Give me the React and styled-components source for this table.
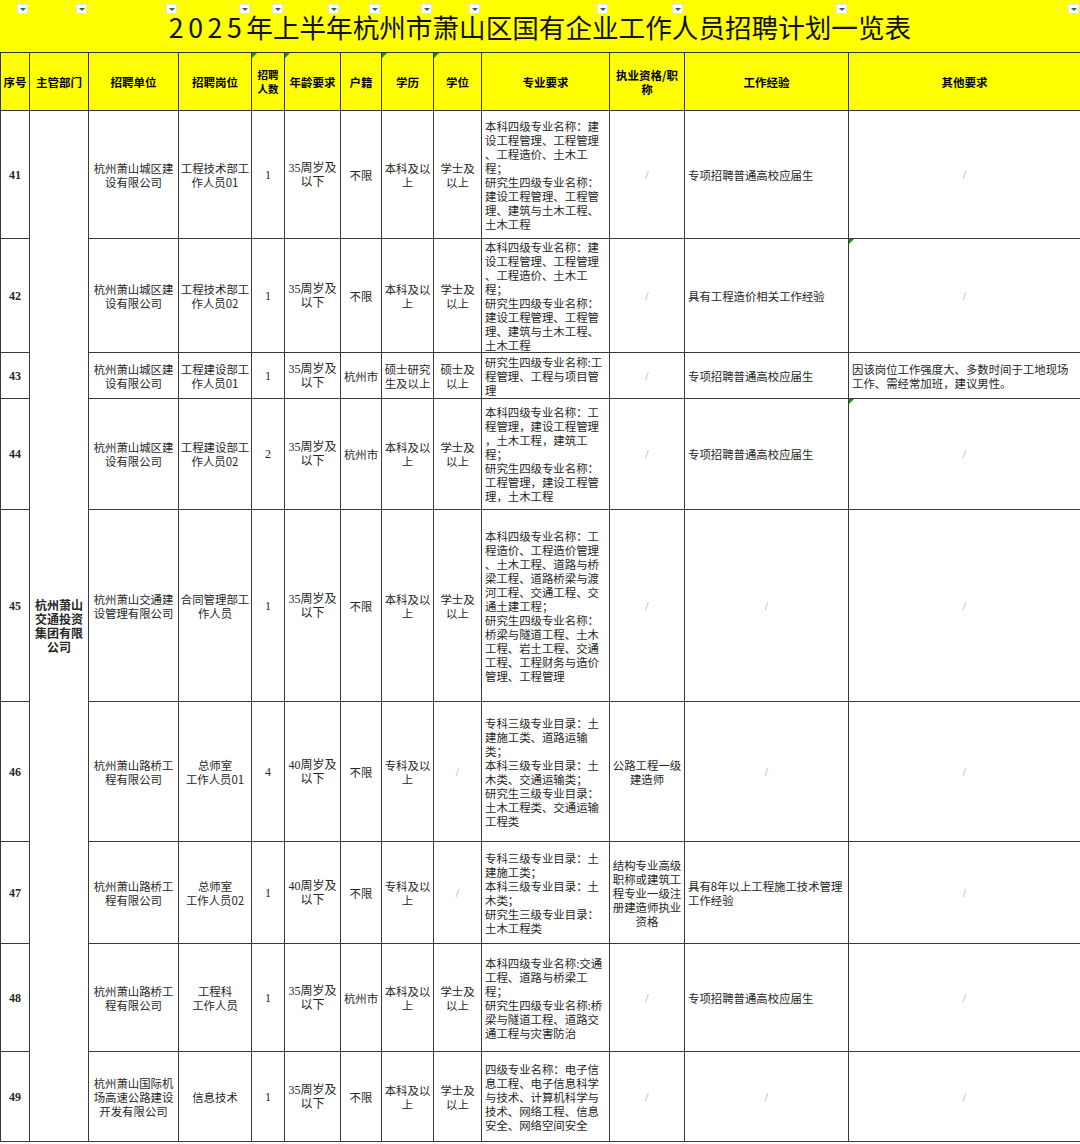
import React from 'react';
import styled, { createGlobalStyle, css } from 'styled-components';

const COLS = [29, 59, 90, 73, 33, 56, 41, 52, 48, 128, 75, 164, 232];
const SANS = `"Noto Sans CJK SC", "Noto Sans", sans-serif`;
const SERIF = `"Liberation Serif", "Noto Sans CJK SC", serif`;

const GlobalStyle = createGlobalStyle`
  html, body { margin: 0; padding: 0; background: #fff; }
  body { font-family: ${SANS}; color: #222; }
`;

const Page = styled.div`
  width: 1080px;
`;

const TitleBar = styled.div`
  display: grid;
  grid-template-columns: ${COLS.map((w) => `${w}px`).join(' ')};
  height: 52px;
  background: #ffff00;
`;

const TitleText = styled.h1`
  grid-column: 1 / -1;
  grid-row: 1;
  align-self: center;
  justify-self: center;
  margin: 3px 0 0;
  font: 400 26.6px/1 ${SANS};
  color: #111;
  white-space: nowrap;
`;

const Year = styled.span`
  letter-spacing: 4.6px;
`;

const FilterBtn = styled.span`
  grid-row: 1;
  grid-column: ${(p) => p.$col};
  justify-self: end;
  align-self: start;
  margin: 4px 1px 0 0;
  width: 11px;
  height: 10px;
  box-sizing: border-box;
  background: #fff;
  border: 1px solid #e2e2e2;
  display: flex;
  align-items: center;
  justify-content: center;
  &::after {
    content: '';
    border-left: 3px solid transparent;
    border-right: 3px solid transparent;
    border-top: 3px solid #1d6b5e;
  }
`;

const Sheet = styled.table`
  width: 1080px;
  table-layout: fixed;
  border-collapse: collapse;
`;

const Col = styled.col`
  width: ${(p) => p.$w}px;
`;

const Row = styled.tr`
  height: ${(p) => p.$h}px;
`;

const markCss = css`
  &::before {
    content: '';
    position: absolute;
    top: 0;
    left: 0;
    border-top: 5px solid #16902a;
    border-right: 5px solid transparent;
  }
`;

const HeadCell = styled.th`
  position: relative;
  background: #ffff00;
  border: 1px solid #333;
  padding: 0 1px;
  font-family: ${SANS};
  font-weight: 700;
  font-size: ${(p) => (p.$small ? '10.5px' : '11.5px')};
  line-height: 14px;
  color: #000;
  text-align: center;
  vertical-align: middle;
  white-space: pre;
  ${(p) => p.$mark && markCss}
`;

const Cell = styled.td`
  position: relative;
  border: 1px solid #3a3a3a;
  padding: ${(p) => (p.$align === 'left' ? '0 3px' : '0 1px')};
  font-family: ${(p) => (p.$serif ? SERIF : SANS)};
  font-size: ${(p) => (p.$bold || p.$serif ? '12px' : '11.4px')};
  font-weight: ${(p) => (p.$bold ? 700 : 400)};
  line-height: 14px;
  color: ${(p) => (p.$muted ? '#a0a0a0' : '#262626')};
  text-align: ${(p) => p.$align || 'center'};
  vertical-align: middle;
  white-space: pre;
  overflow: hidden;
  ${(p) => p.$mark && markCss}
`;

const HEADERS = [
  { t: '序号' },
  { t: '主管部门' },
  { t: '招聘单位' },
  { t: '招聘岗位' },
  { t: '招聘\n人数', small: true, mark: true },
  { t: '年龄要求', mark: true },
  { t: '户籍' },
  { t: '学历', mark: true },
  { t: '学位', mark: true },
  { t: '专业要求' },
  { t: '执业资格/职\n称' },
  { t: '工作经验' },
  { t: '其他要求' },
];

const M41 = [
  '本科四级专业名称：建',
  '设工程管理、工程管理',
  '、工程造价、土木工',
  '程；',
  '研究生四级专业名称：',
  '建设工程管理、工程管',
  '理、建筑与土木工程、',
  '土木工程',
].join('\n');

const ROWS = [
  {
    no: 41, h: 128, unit: '杭州萧山城区建\n设有限公司', pos: '工程技术部工\n作人员01', count: '1',
    age: '35周岁及\n以下', hukou: '不限', edu: '本科及以\n上', degree: '学士及\n以上', major: M41,
    cert: '/', exp: '专项招聘普通高校应届生', other: '/',
  },
  {
    no: 42, h: 114, unit: '杭州萧山城区建\n设有限公司', pos: '工程技术部工\n作人员02', count: '1',
    age: '35周岁及\n以下', hukou: '不限', edu: '本科及以\n上', degree: '学士及\n以上', major: M41,
    cert: '/', exp: '具有工程造价相关工作经验', other: '/', otherMark: true,
  },
  {
    no: 43, h: 46, unit: '杭州萧山城区建\n设有限公司', pos: '工程建设部工\n作人员01', count: '1',
    age: '35周岁及\n以下', hukou: '杭州市', edu: '硕士研究\n生及以上', degree: '硕士及\n以上',
    major: '研究生四级专业名称:工\n程管理、工程与项目管\n理',
    cert: '/', exp: '专项招聘普通高校应届生',
    other: '因该岗位工作强度大、多数时间于工地现场\n工作、需经常加班，建议男性。',
  },
  {
    no: 44, h: 111, unit: '杭州萧山城区建\n设有限公司', pos: '工程建设部工\n作人员02', count: '2',
    age: '35周岁及\n以下', hukou: '杭州市', edu: '本科及以\n上', degree: '学士及\n以上',
    major: [
      '本科四级专业名称：工',
      '程管理，建设工程管理',
      '，土木工程，建筑工',
      '程；',
      '研究生四级专业名称：',
      '工程管理，建设工程管',
      '理，土木工程',
    ].join('\n'),
    cert: '/', exp: '专项招聘普通高校应届生', other: '/', otherMark: true,
  },
  {
    no: 45, h: 192, unit: '杭州萧山交通建\n设管理有限公司', pos: '合同管理部工\n作人员', count: '1',
    age: '35周岁及\n以下', hukou: '不限', edu: '本科及以\n上', degree: '学士及\n以上',
    major: [
      '本科四级专业名称：工',
      '程造价、工程造价管理',
      '、土木工程、道路与桥',
      '梁工程、道路桥梁与渡',
      '河工程、交通工程、交',
      '通土建工程；',
      '研究生四级专业名称：',
      '桥梁与隧道工程、土木',
      '工程、岩土工程、交通',
      '工程、工程财务与造价',
      '管理、工程管理',
    ].join('\n'),
    cert: '/', exp: '/', other: '/',
  },
  {
    no: 46, h: 140, unit: '杭州萧山路桥工\n程有限公司', pos: '总师室\n工作人员01', count: '4',
    age: '40周岁及\n以下', hukou: '不限', edu: '专科及以\n上', degree: '/',
    major: [
      '专科三级专业目录：土',
      '建施工类、道路运输',
      '类；',
      '本科三级专业目录：土',
      '木类、交通运输类；',
      '研究生三级专业目录：',
      '土木工程类、交通运输',
      '工程类',
    ].join('\n'),
    cert: '公路工程一级\n建造师', exp: '/', other: '/',
  },
  {
    no: 47, h: 102, unit: '杭州萧山路桥工\n程有限公司', pos: '总师室\n工作人员02', count: '1',
    age: '40周岁及\n以下', hukou: '不限', edu: '专科及以\n上', degree: '/',
    major: [
      '专科三级专业目录：土',
      '建施工类；',
      '本科三级专业目录：土',
      '木类；',
      '研究生三级专业目录：',
      '土木工程类',
    ].join('\n'),
    cert: '结构专业高级\n职称或建筑工\n程专业一级注\n册建造师执业\n资格',
    exp: '具有8年以上工程施工技术管理\n工作经验', other: '/',
  },
  {
    no: 48, h: 108, unit: '杭州萧山路桥工\n程有限公司', pos: '工程科\n工作人员', count: '1',
    age: '35周岁及\n以下', hukou: '杭州市', edu: '本科及以\n上', degree: '学士及\n以上',
    major: [
      '本科四级专业名称:交通',
      '工程、道路与桥梁工',
      '程；',
      '研究生四级专业名称:桥',
      '梁与隧道工程、道路交',
      '通工程与灾害防治',
    ].join('\n'),
    cert: '/', exp: '专项招聘普通高校应届生', other: '/',
  },
  {
    no: 49, h: 90, unit: '杭州萧山国际机\n场高速公路建设\n开发有限公司', pos: '信息技术', count: '1',
    age: '35周岁及\n以下', hukou: '不限', edu: '本科及以\n上', degree: '学士及\n以上',
    major: [
      '四级专业名称：电子信',
      '息工程、电子信息科学',
      '与技术、计算机科学与',
      '技术、网络工程、信息',
      '安全、网络空间安全',
    ].join('\n'),
    cert: '/', exp: '/', other: '/',
  },
];

function Text({ value, align, serif, mark }) {
  const muted = value === '/';
  return (
    <Cell $align={muted ? 'center' : align} $serif={serif || muted} $muted={muted} $mark={mark}>
      {value}
    </Cell>
  );
}

export default function App() {
  return (
    <Page>
      <GlobalStyle />
      <TitleBar>
        <TitleText>
          <Year>2025</Year>年上半年杭州市萧山区国有企业工作人员招聘计划一览表
        </TitleText>
        {COLS.map((_, i) => (
          <FilterBtn key={i} $col={i + 1} />
        ))}
      </TitleBar>
      <Sheet>
        <colgroup>
          {COLS.map((w, i) => (
            <Col key={i} $w={w} />
          ))}
        </colgroup>
        <thead>
          <Row $h={58}>
            {HEADERS.map((h, i) => (
              <HeadCell key={i} $small={h.small} $mark={h.mark}>
                {h.t}
              </HeadCell>
            ))}
          </Row>
        </thead>
        <tbody>
          {ROWS.map((r, i) => (
            <Row key={r.no} $h={r.h}>
              <Cell $serif $bold>{r.no}</Cell>
              {i === 0 && (
                <Cell rowSpan={ROWS.length} $bold>
                  {'杭州萧山\n交通投资\n集团有限\n公司'}
                </Cell>
              )}
              <Text value={r.unit} />
              <Text value={r.pos} />
              <Text value={r.count} serif />
              <Text value={r.age} serif />
              <Text value={r.hukou} />
              <Text value={r.edu} />
              <Text value={r.degree} />
              <Text value={r.major} align="left" />
              <Text value={r.cert} />
              <Text value={r.exp} align="left" />
              <Text value={r.other} align="left" mark={r.otherMark} />
            </Row>
          ))}
        </tbody>
      </Sheet>
    </Page>
  );
}
